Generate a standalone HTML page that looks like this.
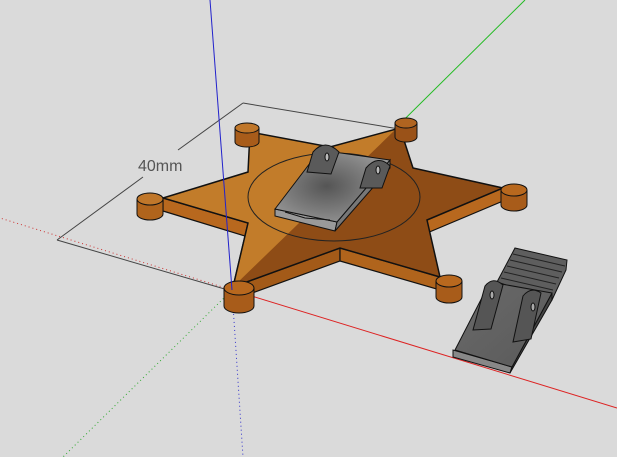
<!DOCTYPE html>
<html><head><meta charset="utf-8"><style>
html,body{margin:0;padding:0;background:#dadada;}
svg{display:block}
</style></head><body>
<svg width="617" height="457" viewBox="0 0 617 457" xmlns="http://www.w3.org/2000/svg">
<defs>
<radialGradient id="metal" cx="45%" cy="50%" r="60%"><stop offset="0" stop-color="#555"/><stop offset="0.6" stop-color="#7d7d7d"/><stop offset="1" stop-color="#9a9a9a"/></radialGradient>
<linearGradient id="metal2" x1="0" y1="0" x2="1" y2="1"><stop offset="0" stop-color="#6a6a6a"/><stop offset="1" stop-color="#5a5a5a"/></linearGradient>
</defs>
<rect width="617" height="457" fill="#dadada"/>
<!-- axes -->
<line x1="232" y1="290" x2="0" y2="218" stroke="#c33" stroke-width="1" stroke-dasharray="1,3"/>
<line x1="232" y1="290" x2="63" y2="457" stroke="#3a3" stroke-width="1" stroke-dasharray="1,3"/>
<line x1="232" y1="290" x2="243" y2="457" stroke="#33c" stroke-width="1" stroke-dasharray="1,3"/>
<line x1="232" y1="290" x2="617" y2="408" stroke="#d22" stroke-width="1"/>
<line x1="232" y1="290" x2="525" y2="0" stroke="#2b2" stroke-width="1"/>
<!-- dimension -->
<line x1="243" y1="103" x2="405" y2="130" stroke="#444" stroke-width="1"/>
<line x1="57" y1="240" x2="228" y2="290" stroke="#444" stroke-width="1"/>
<line x1="57" y1="240" x2="143" y2="177" stroke="#444" stroke-width="1"/>
<line x1="178" y1="150" x2="243" y2="103" stroke="#444" stroke-width="1"/>
<text x="138" y="171" font-family="Liberation Sans, sans-serif" font-size="16" fill="#555">40mm</text>
<!-- star sides -->
<g stroke="#111" stroke-width="1.2">
<polygon points="163,198 163,211 248,237 248,223" fill="#b8681e"/>
<polygon points="248,223 233,287 233,300 248,237" fill="#8f4d14"/>
<polygon points="233,287 340,248 340,261 233,300" fill="#a35a18"/>
<polygon points="340,248 440,277 440,290 340,261" fill="#b0641c"/>
<polygon points="427,220 503,188 503,201 427,233" fill="#b8681e"/>
</g>
<!-- star top -->
<polygon points="250,132 330,147 400,128 413,168 503,188 427,220 440,277 340,248 233,287 248,223 163,198 248,172" fill="#c27c2a"/>
<polygon points="233,287 396,129 400,128 413,168 503,188 427,220 440,277 340,248" fill="#8e4c16"/>
<polygon points="250,132 330,147 400,128 413,168 503,188 427,220 440,277 340,248 233,287 248,223 163,198 248,172" fill="none" stroke="#111" stroke-width="1.5"/>
<ellipse cx="334" cy="197" rx="86" ry="44" fill="none" stroke="#222"/>
<!-- posts -->
<g stroke="#111" stroke-width="1">
<path d="M224,288 v18 a15,7 0 0 0 30,0 v-18" fill="#a85c1a"/><ellipse cx="239" cy="288" rx="15" ry="7" fill="#b8681e"/>
<path d="M436,281 v16 a13,6 0 0 0 26,0 v-16" fill="#a85c1a"/><ellipse cx="449" cy="281" rx="13" ry="6" fill="#b8681e"/>
<path d="M137,199 v15 a13,6 0 0 0 26,0 v-15" fill="#b0641c"/><ellipse cx="150" cy="199" rx="13" ry="6" fill="#c0772a"/>
<path d="M501,190 v15 a13,6 0 0 0 26,0 v-15" fill="#a85c1a"/><ellipse cx="514" cy="190" rx="13" ry="6" fill="#b8681e"/>
<path d="M235,128 v14 a12,5 0 0 0 24,0 v-14" fill="#a85c1a"/><ellipse cx="247" cy="128" rx="12" ry="5" fill="#c0772a"/>
<path d="M395,123 v14 a11,5 0 0 0 22,0 v-14" fill="#9a5218"/><ellipse cx="406" cy="123" rx="11" ry="5" fill="#b06420"/>
</g>
<!-- block on star -->
<g stroke="#111" stroke-width="1">
<polygon points="275,209 275,216 335,231 337,222" fill="#9a9a9a"/>
<polygon points="337,222 335,231 390,168 390,160" fill="#777"/>
<polygon points="275,209 320,150 390,160 337,222" fill="url(#metal)"/>
<polyline points="285,212 305,218 330,220" fill="none"/>
<path d="M307,172 l6,-20 q12,-14 26,0 l-8,22 z" fill="#5a5a5a"/>
<ellipse cx="327" cy="157" rx="2" ry="4" fill="#bbb"/>
<path d="M360,188 l6,-20 q12,-14 24,-2 l-8,22 z" fill="#5a5a5a"/>
<ellipse cx="378" cy="170" rx="2" ry="4" fill="#bbb"/>
</g>
<!-- separate slider -->
<g stroke="#111" stroke-width="1">
<polygon points="515,248 567,260 566,270 552,300 497,282" fill="#5e5e5e"/>
<g stroke="#222"><line x1="513" y1="254" x2="565" y2="266"/><line x1="510" y1="260" x2="562" y2="272"/><line x1="507" y1="266" x2="559" y2="278"/><line x1="504" y1="272" x2="556" y2="284"/><line x1="501" y1="278" x2="553" y2="290"/></g>
<polygon points="453,350 453,357 510,373 512,367" fill="#888"/>
<polygon points="512,367 510,373 552,300 552,293" fill="#444"/>
<polygon points="455,350 490,282 552,293 512,367" fill="url(#metal2)"/>
<path d="M473,330 l12,-44 q8,-10 18,-1 l-12,44 z" fill="#555"/>
<ellipse cx="492" cy="295" rx="2" ry="4" fill="#aaa"/>
<path d="M513,342 l10,-46 q8,-10 18,-3 l-10,46 z" fill="#555"/>
<ellipse cx="533" cy="307" rx="2" ry="4" fill="#aaa"/>
</g>
<line x1="210" y1="0" x2="232" y2="290" stroke="#22c" stroke-width="1"/>
</svg>
</body></html>
